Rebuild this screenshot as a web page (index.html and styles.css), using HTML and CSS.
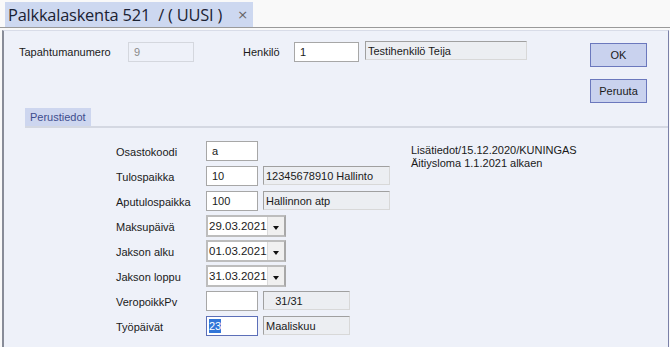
FILE: index.html
```html
<!DOCTYPE html>
<html lang="fi">
<head>
  <meta charset="UTF-8">
  <title>Palkkalaskenta</title>
  <link rel="stylesheet" href="styles.css">
</head>
<body>
  <div class="tabbar">
    <div class="doc-tab">
      <span class="doc-title">Palkkalaskenta 521&nbsp; / ( UUSI )</span>
      <span class="doc-close">&times;</span>
    </div>
  </div>

  <div class="panel">
    <div class="header">
      <div class="header-fields">
        <label class="lbl lbl-tap">Tapahtumanumero</label>
        <div class="field field-disabled w-tap">9</div>
        <label class="lbl lbl-hen">Henkilö</label>
        <div class="field w-hen">1</div>
        <div class="field field-ro w-name">Testihenkilö Teija</div>
      </div>
      <div class="buttons">
        <button class="btn">OK</button>
        <button class="btn">Peruuta</button>
      </div>
    </div>

    <div class="subtabs">
      <div class="subtab">Perustiedot</div>
    </div>

    <div class="content">
      <div class="form">
        <label class="lbl">Osastokoodi</label>
        <div class="cell"><div class="field w-code">a</div></div>

        <label class="lbl">Tulospaikka</label>
        <div class="cell">
          <div class="field w-code">10</div>
          <div class="field field-ro w-desc">12345678910 Hallinto</div>
        </div>

        <label class="lbl">Aputulospaikka</label>
        <div class="cell">
          <div class="field w-code">100</div>
          <div class="field field-ro w-desc">Hallinnon atp</div>
        </div>

        <label class="lbl">Maksupäivä</label>
        <div class="cell"><div class="combo"><span class="combo-val">29.03.2021</span><span class="combo-btn"></span></div></div>

        <label class="lbl">Jakson alku</label>
        <div class="cell"><div class="combo"><span class="combo-val">01.03.2021</span><span class="combo-btn"></span></div></div>

        <label class="lbl">Jakson loppu</label>
        <div class="cell"><div class="combo"><span class="combo-val">31.03.2021</span><span class="combo-btn"></span></div></div>

        <label class="lbl">VeropoikkPv</label>
        <div class="cell">
          <div class="field w-code"></div>
          <div class="field field-ro w-short">&nbsp;&nbsp;&nbsp;31/31</div>
        </div>

        <label class="lbl">Työpäivät</label>
        <div class="cell">
          <div class="field field-focus w-code"><span class="sel">23</span></div>
          <div class="field field-ro w-short">Maaliskuu</div>
        </div>
      </div>

      <div class="notes">
        <p>Lisätiedot/15.12.2020/KUNINGAS</p>
        <p>Äitiysloma 1.1.2021 alkaen</p>
      </div>
    </div>
  </div>
</body>
</html>
```

FILE: styles.css
```css
body {
  margin: 0;
  padding: 0;
  background-color: #f9f9f9;
  font-family: "Liberation Sans", Arial, sans-serif;
  font-size: 11px;
  color: #1a1a1a;
  height: 347px;
  overflow: hidden;
}

/* Document tab */
.tabbar {
  height: 28px;
  padding-left: 5px;
  display: flex;
  align-items: flex-end;
  border-bottom: 1px solid #9a9a9a;
  box-sizing: border-box;
}

.doc-tab {
  height: 25px;
  width: 248px;
  background-color: #cdd8f0;
  display: flex;
  align-items: center;
  padding-left: 3px;
  box-sizing: border-box;
}

.doc-title {
  font-family: "Open Sans", "Noto Sans", sans-serif;
  font-size: 16.4px;
  color: #1b2233;
  letter-spacing: -0.2px;
  white-space: pre;
}

.doc-close {
  margin-left: 15px;
  font-family: "DejaVu Sans", sans-serif;
  font-size: 13px;
  color: #666;
}

/* Main panel */
.panel {
  height: 319px;
  margin-left: 2px;
  margin-right: 1px;
  margin-top: 2px;
  background-color: #eef1f9;
  border-left: 2px solid #888c98;
  border-right: 1px solid #7a80a8;
  border-top: 1px solid #d8dce8;
  box-sizing: border-box;
  padding: 10px 0 0 15px;
}

.header {
  display: flex;
  justify-content: space-between;
  padding-right: 21px;
}

.header-fields {
  display: flex;
  align-items: center;
  height: 21px;
}

.lbl {
  color: #1a1a1a;
}

.lbl-tap {
  width: 109px;
}

.lbl-hen {
  margin-left: 49px;
  width: 51px;
}

.field {
  height: 20px;
  box-sizing: border-box;
  border: 1px solid #a7a7a7;
  background-color: #fff;
  padding: 2px 0 0 5px;
  line-height: 14px;
  font-size: 11px;
  white-space: pre;
}

.field-disabled {
  background-color: #eef1f9;
  border-color: #d4d7de;
  color: #8a8a8a;
}

.field-ro {
  background-color: #eceef2;
  border: 1px solid #d8d8d8;
  border-left-color: #a0a0a0;
  border-top-color: #a0a0a0;
  padding-left: 2px;
  height: 19px;
  align-self: flex-start;
}

.field-focus {
  border-color: #5c6fb8;
  padding-left: 2px;
}

.sel {
  background-color: #3276d8;
  color: #fff;
  padding: 1px 0;
}

.w-tap { width: 66px; }
.w-hen { width: 65px; margin-right: 6px; }
.w-name { width: 162px; }
.w-code { width: 52px; margin-right: 5px; }
.w-desc { width: 127px; }
.w-short { width: 87px; }

.buttons {
  display: flex;
  flex-direction: column;
  gap: 12px;
  padding-top: 2px;
}

.btn {
  width: 57px;
  height: 24px;
  background-color: #c9d2ee;
  border: 1px solid #6b78bd;
  font-family: "Liberation Sans", Arial, sans-serif;
  font-size: 11px;
  color: #1a1a1a;
  padding: 0;
}

/* Inner tab */
.subtabs {
  margin: 5px 0 0 6px;
  border-bottom: 2px solid #d4d8e2;
}

.subtab {
  display: inline-block;
  height: 18px;
  line-height: 18px;
  padding: 0 5px;
  background-color: #cdd6ef;
  color: #3d4d8e;
}

.content {
  display: flex;
  padding: 13px 0 0 97px;
}

.form {
  display: grid;
  grid-template-columns: 90px auto;
  grid-auto-rows: 25px;
  align-items: start;
  width: 295px;
}

.form .lbl {
  line-height: 20px;
  margin-top: 1px;
}

.cell {
  display: flex;
}

.combo {
  width: 80px;
  height: 22px;
  margin-top: -1px;
  box-sizing: border-box;
  border: 2px solid #bdbdbd;
  border-right-color: #a8a8a8;
  background-color: #fff;
  display: flex;
  align-items: stretch;
}

.combo-val {
  flex: 1;
  padding-left: 1px;
  line-height: 18px;
  font-size: 11.5px;
}

.combo-btn {
  width: 16px;
  background-color: #f0f0f0;
  border-left: 1px solid #dadada;
  display: flex;
  align-items: center;
  justify-content: center;
}

.combo-btn::after {
  content: "";
  border-left: 3px solid transparent;
  border-right: 3px solid transparent;
  border-top: 4px solid #111;
  margin-top: 3px;
}

.notes {
  margin-top: 3px;
}

.notes p {
  margin: 0;
  line-height: 13px;
}
```
